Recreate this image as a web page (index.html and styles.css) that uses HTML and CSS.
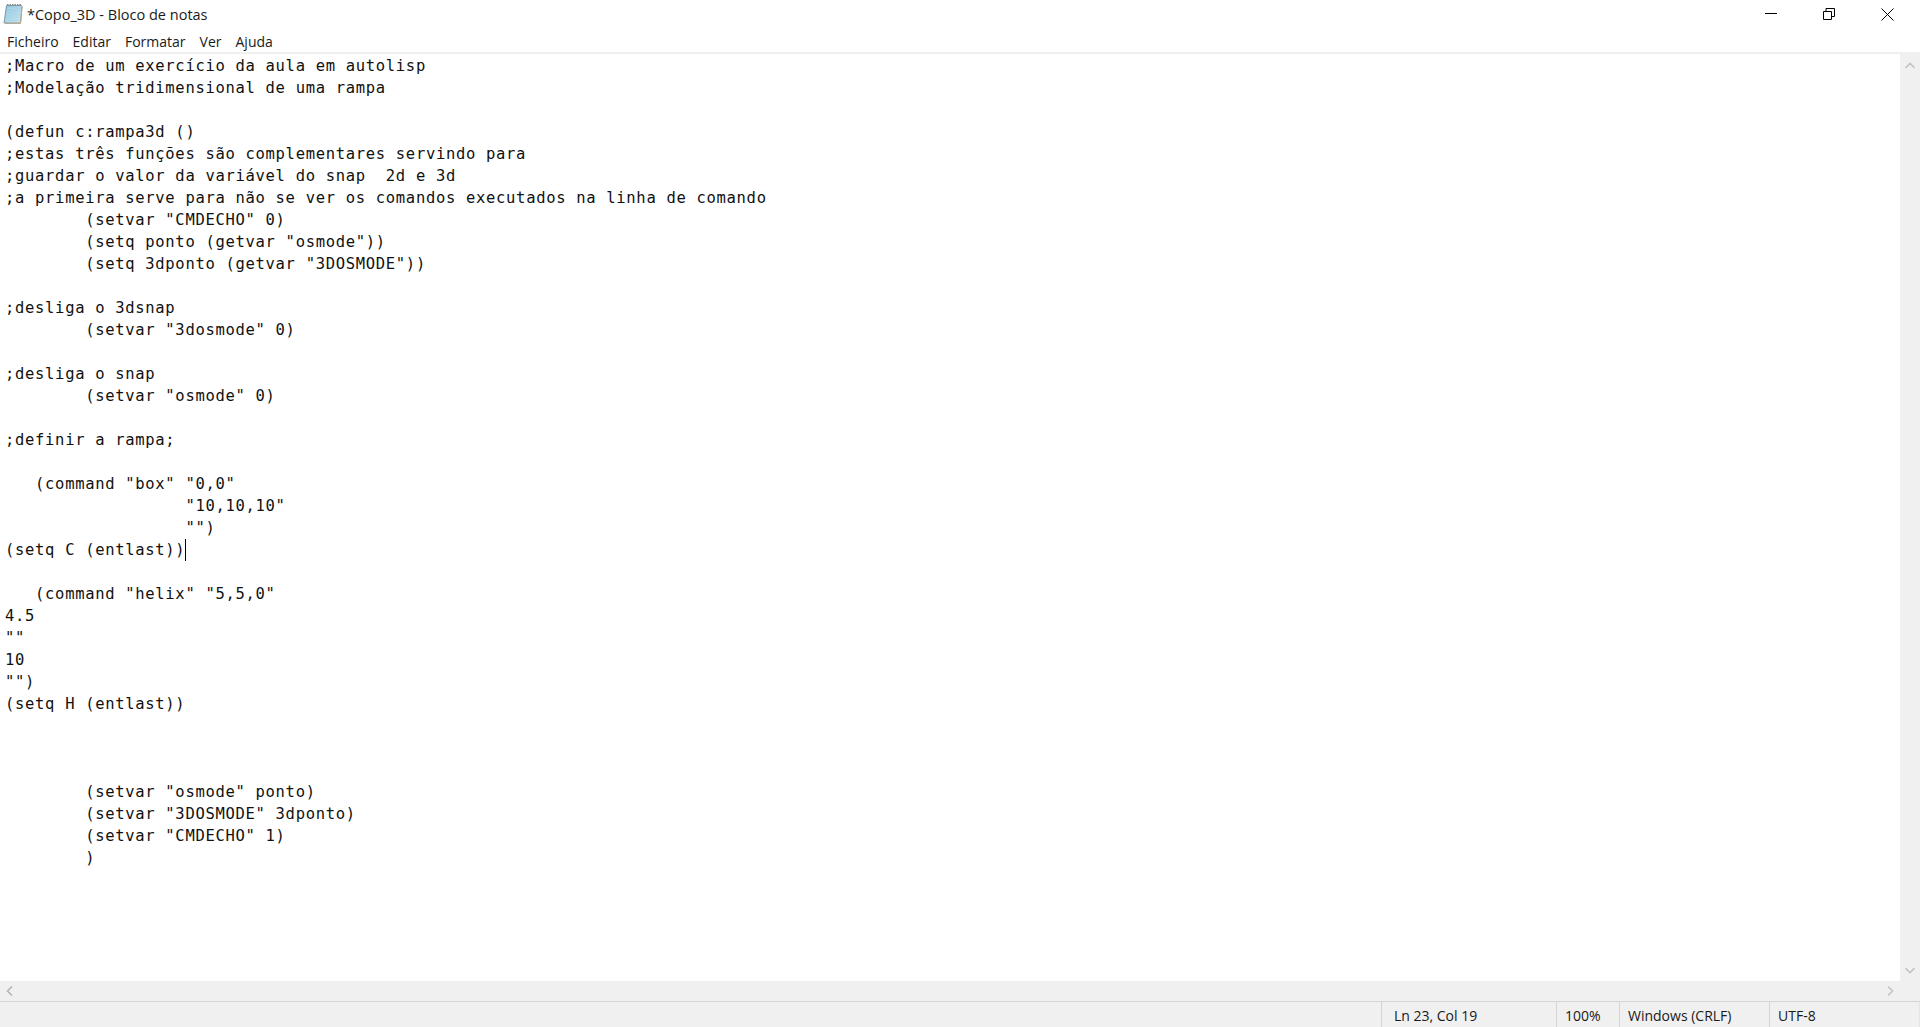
FILE: index.html
```html
<!DOCTYPE html>
<html lang="pt">
<head>
<meta charset="utf-8">
<title>*Copo_3D - Bloco de notas</title>
<link rel="stylesheet" href="styles.css">
</head>
<body>
<div class="window">
  <header class="titlebar">
    <div class="title-left">
      <svg class="app-icon" width="20" height="20" viewBox="0 0 20 20">
        <defs>
          <linearGradient id="pad" x1="0" y1="0" x2="1" y2="1">
            <stop offset="0" stop-color="#8cc3dc"/>
            <stop offset="1" stop-color="#cfe8f2"/>
          </linearGradient>
        </defs>
        <path d="M3.500 1.500h15l.5 1-1.500 16.500H1z" fill="url(#pad)" stroke="#7f9aa6" stroke-width="1"/>
        <path d="M4 4.500h13M3.700 7.500h13M3.400 10.500h13M3.100 13.500h13M2.800 16.500h13" stroke="#a9d6e8" stroke-width="1"/>
        <path d="M4 1h14" stroke="#8c8c8c" stroke-width="2" stroke-dasharray="1.500 1"/>
        <path d="M19 3 17.500 19.500H2" fill="none" stroke="#b9a98f" stroke-width="1"/>
      </svg>
      <span class="title-text">*Copo_3D - Bloco de notas</span>
    </div>
    <div class="controls">
      <div class="ctl"><svg width="12" height="12" viewBox="0 0 12 12"><path d="M0 5.500h12" stroke="#000" fill="none"/></svg></div>
      <div class="ctl"><svg width="12" height="12" viewBox="0 0 12 12"><path d="M.5 3.500h8v8h-8zM3 3.500V.5h8.500v8H8.500" stroke="#000" fill="none"/></svg></div>
      <div class="ctl"><svg width="13" height="13" viewBox="0 0 13 13"><path d="M.5.5l12 12M12.500.5l-12 12" stroke="#000" fill="none"/></svg></div>
    </div>
  </header>
  <nav class="menubar">
    <span>Ficheiro</span><span>Editar</span><span>Formatar</span><span>Ver</span><span>Ajuda</span>
  </nav>
  <main class="editor">
    <div class="text-row">
<pre class="code">;Macro de um exercício da aula em autolisp
;Modelação tridimensional de uma rampa

(defun c:rampa3d ()
;estas três funções são complementares servindo para
;guardar o valor da variável do snap  2d e 3d
;a primeira serve para não se ver os comandos executados na linha de comando
        (setvar "CMDECHO" 0)
        (setq ponto (getvar "osmode"))
        (setq 3dponto (getvar "3DOSMODE"))

;desliga o 3dsnap
        (setvar "3dosmode" 0)

;desliga o snap
        (setvar "osmode" 0)

;definir a rampa;

   (command "box" "0,0"
                  "10,10,10"
                  "")
(setq C (entlast))<i class="caret"></i>

   (command "helix" "5,5,0"
4.5
""
10
"")
(setq H (entlast))



        (setvar "osmode" ponto)
        (setvar "3DOSMODE" 3dponto)
        (setvar "CMDECHO" 1)
        )</pre>
    </div>
    <div class="vscroll">
      <svg width="10" height="7" viewBox="0 0 10 7"><path d="M.5 6 5 1.500 9.500 6" fill="none" stroke="#c4c4c4" stroke-width="1.600"/></svg>
      <svg width="10" height="7" viewBox="0 0 10 7"><path d="M.5 1 5 5.500 9.500 1" fill="none" stroke="#c4c4c4" stroke-width="1.600"/></svg>
    </div>
  </main>
  <div class="hscroll">
    <svg width="7" height="10" viewBox="0 0 7 10"><path d="M6 .5 1.500 5 6 9.500" fill="none" stroke="#b4b4b4" stroke-width="1.600"/></svg>
    <svg width="7" height="10" viewBox="0 0 7 10"><path d="M1 .5 5.500 5 1 9.500" fill="none" stroke="#c4c4c4" stroke-width="1.600"/></svg>
  </div>
  <footer class="statusbar">
    <div class="st st-pos">Ln 23, Col 19</div>
    <div class="st st-zoom">100%</div>
    <div class="st st-eol">Windows (CRLF)</div>
    <div class="st st-enc">UTF-8</div>
  </footer>
</div>
</body>
</html>
```
FILE: styles.css
```css
* { box-sizing: border-box; }
html, body { margin: 0; height: 100%; background: #fff; overflow: hidden; }
.window {
  display: flex; flex-direction: column; height: 1027px; width: 1920px;
  font-family: "Open Sans", "Noto Sans", "Liberation Sans", sans-serif; color: #1a1a1a;
}
.titlebar { display: flex; justify-content: space-between; height: 30px; flex: none; }
.title-left { display: flex; align-items: center; padding: 0 0 2px 3px; gap: 4px; }
.app-icon { flex: none; }
.title-text { font-size: 14.5px; }
.controls { display: flex; padding: 0 3px 2px 0; }
.ctl { width: 58.500px; display: flex; align-items: center; justify-content: center; }
.menubar {
  display: flex; gap: 14px; height: 22px; flex: none; padding-left: 7px; align-items: center;
  font-size: 14px;
}
.editor { flex: 1; display: flex; min-height: 0; border-top: 2px solid #f0f0f0; }
.text-row { flex: 1; min-width: 0; }
.code {
  margin: 0; padding: 1px 0 0 5px;
  font-family: "DejaVu Sans Mono", "Liberation Mono", monospace;
  font-size: 15.500px; letter-spacing: 0.690px; line-height: 22px; color: #111;
}
.caret { display: inline-block; width: 1px; height: 22px; background: #000; vertical-align: -6px; }
.vscroll {
  width: 20px; flex: none; background: #f0f0f0; display: flex; flex-direction: column;
  justify-content: space-between; align-items: center; padding: 8px 0 7px;
}
.hscroll {
  height: 20px; flex: none; background: #f0f0f0; display: flex; justify-content: space-between;
  align-items: center; padding: 0 26px 0 6px;
}
.statusbar {
  height: 26px; flex: none; background: #f0f0f0; border-top: 1px solid #d4d4d4;
  display: flex; padding-left: 1381px; font-size: 14px; align-items: stretch;
}
.st { border-left: 1px solid #d4d4d4; display: flex; align-items: center; padding: 1px 0 0 8px; }
.st-pos { width: 175px; padding-left: 12px; }
.st-zoom { width: 63px; }
.st-eol { width: 150px; }
.st-enc { flex: 1; border-right: 1px solid #e4e4e4; }
```
